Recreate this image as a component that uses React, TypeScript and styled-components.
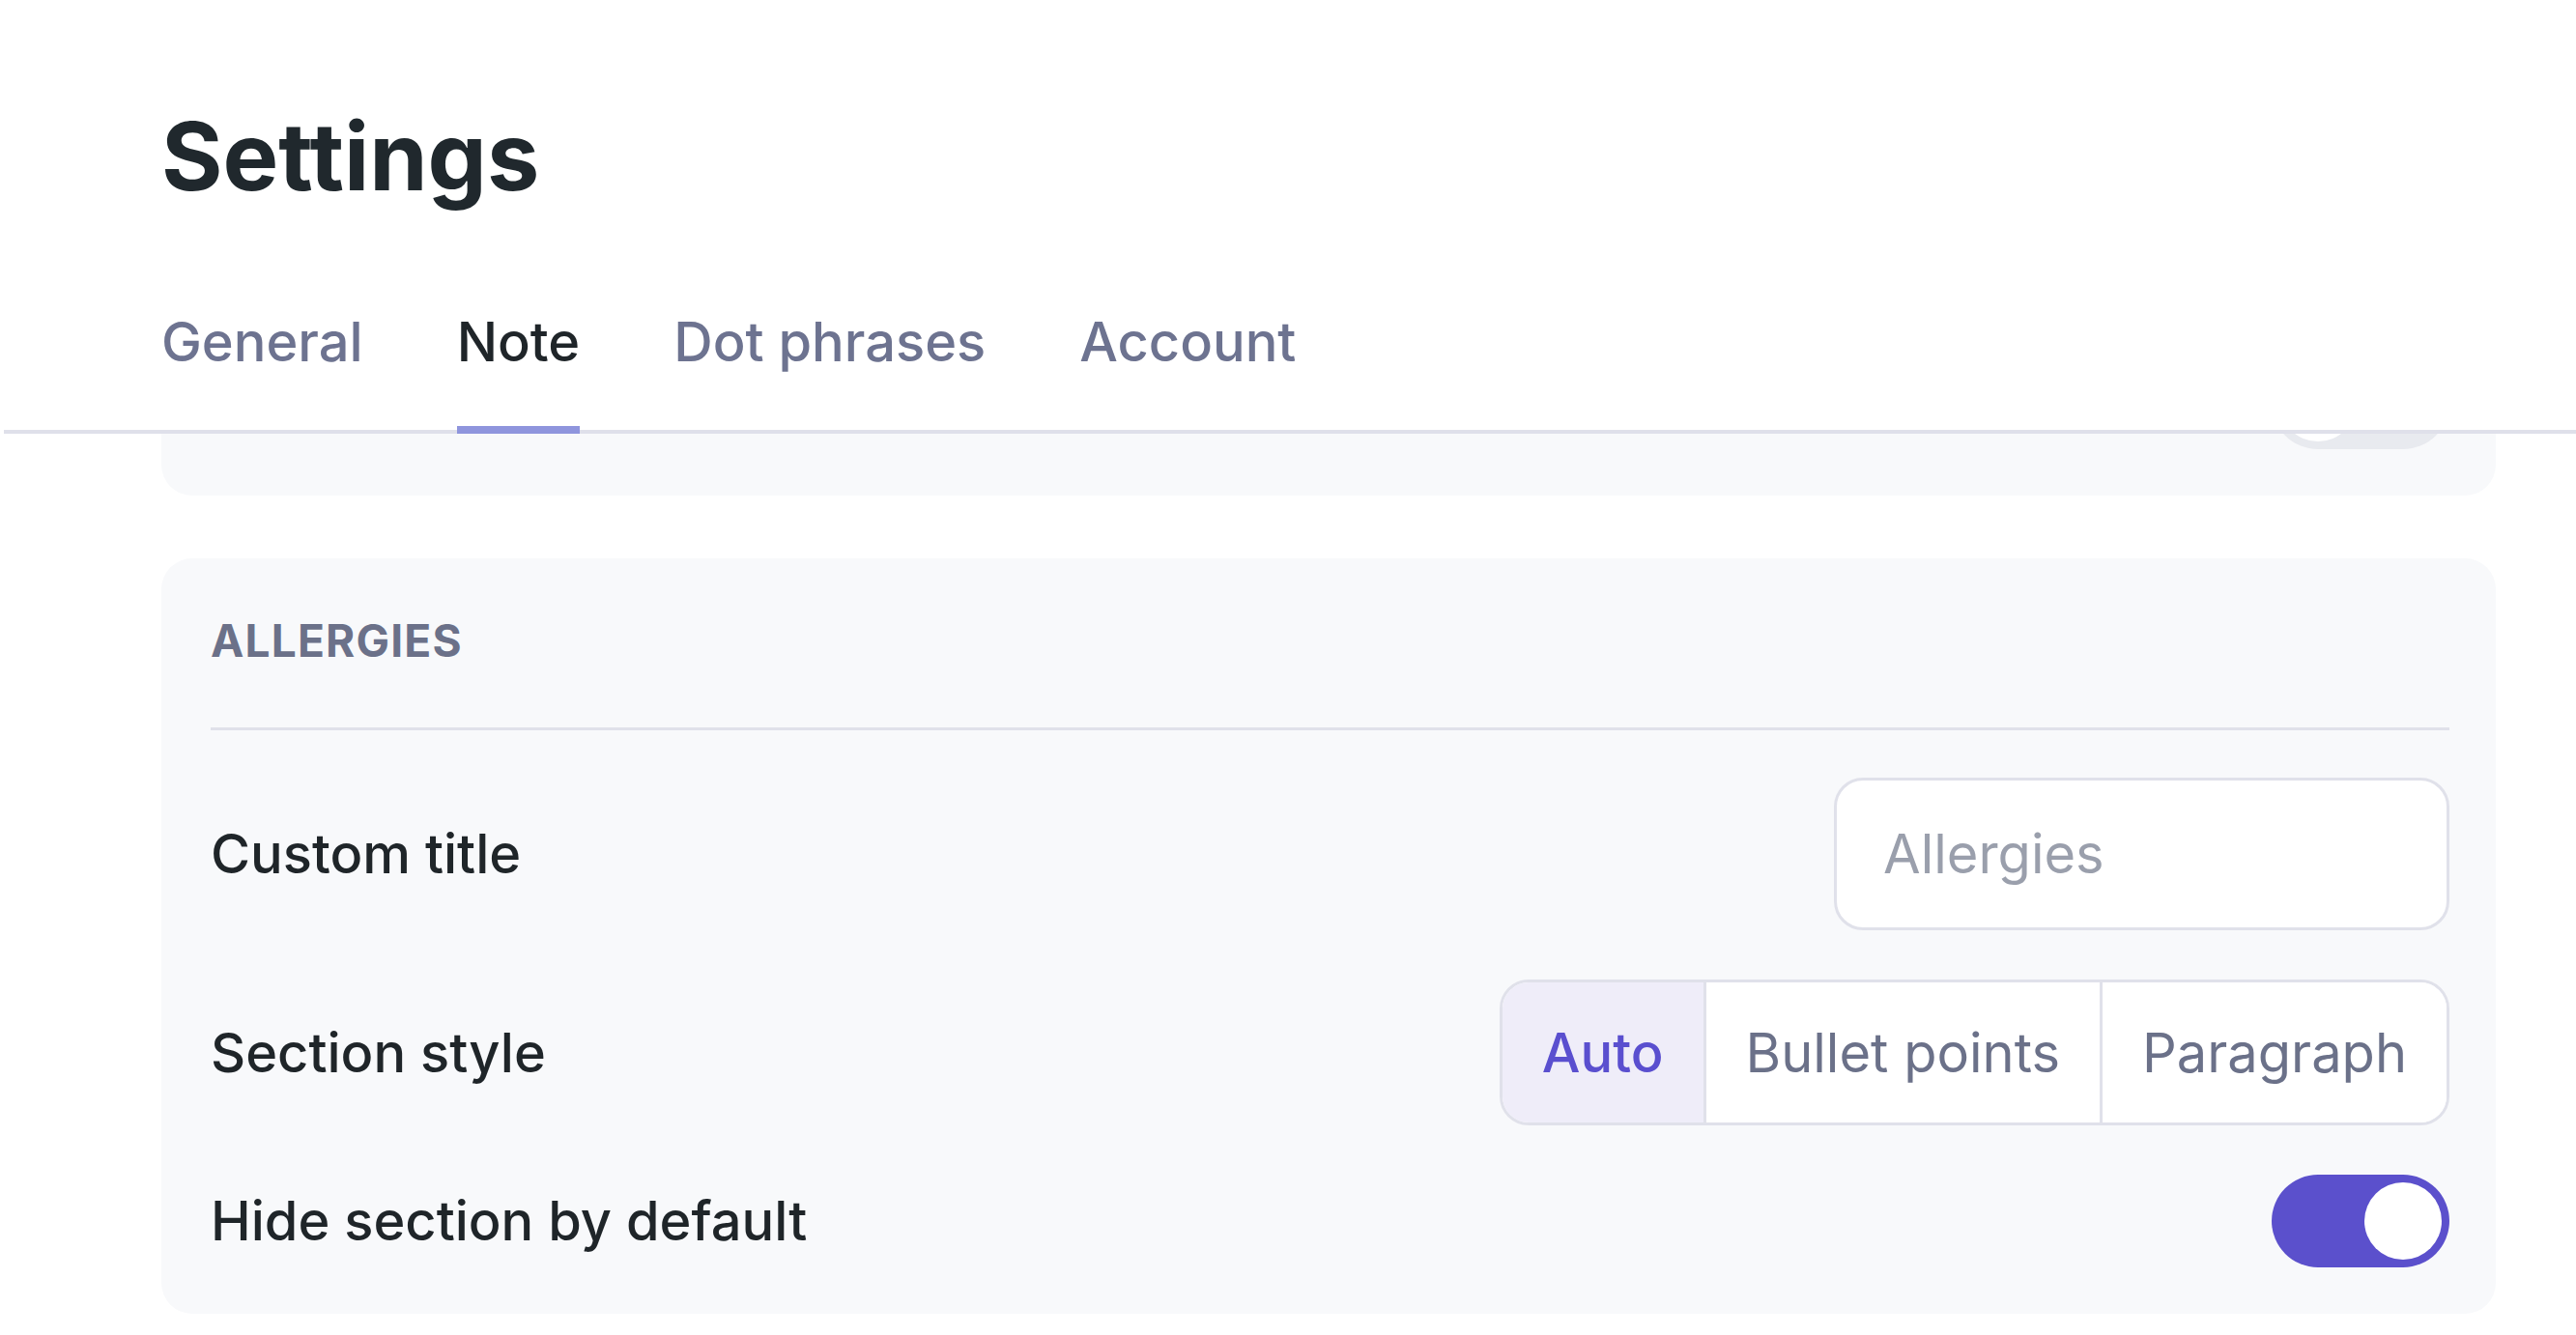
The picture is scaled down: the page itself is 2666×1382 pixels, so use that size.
import { useLayoutEffect, useRef } from "react";
import styled, { createGlobalStyle } from "styled-components";

const GlobalStyle = createGlobalStyle`
    html, body {
        margin: 0;
        padding: 0;
        background: #ffffff;
        font-family: Inter, "Noto Sans", sans-serif;
        color: #1f2529;
    }
    * {
        box-sizing: border-box;
    }
`;

type StyleOption = "Auto" | "Bullet points" | "Paragraph";

type Section = {
    key: string;
    heading: string;
    placeholder: string;
    style: StyleOption;
    hidden: boolean;
};

const sections: Section[] = [
    { key: "hpi", heading: "History of present illness", placeholder: "History of present illness", style: "Paragraph", hidden: false },
    { key: "medications", heading: "Medications", placeholder: "Medications", style: "Bullet points", hidden: false },
    { key: "allergies", heading: "Allergies", placeholder: "Allergies", style: "Auto", hidden: true },
];

const tabs = ["General", "Note", "Dot phrases", "Account"];
const styleOptions: StyleOption[] = ["Auto", "Bullet points", "Paragraph"];

const Page = styled.div`
    height: 100vh;
    display: flex;
    flex-direction: column;
`;

const Header = styled.header`
    flex: none;
    margin-left: 4px;
    padding: 104px 0 0 163px;
    border-bottom: 4px solid #dfe0ea;
    background: #ffffff;
`;

const Title = styled.h1`
    margin: 0 0 92px;
    font-size: 97px;
    line-height: 1.2;
    font-weight: 700;
    color: #20282d;
`;

const TabList = styled.nav`
    display: flex;
    gap: 97px;
    margin-bottom: -4px;
`;

const Tab = styled.span<{ $active?: boolean }>`
    display: block;
    padding-bottom: 53px;
    font-size: 56px;
    line-height: 84px;
    font-weight: 500;
    color: ${(p) => (p.$active ? "#1f2529" : "#6d7390")};
    box-shadow: ${(p) => (p.$active ? "inset 0 -8px 0 #8f95dd" : "none")};
    cursor: pointer;
`;

const ScrollArea = styled.main`
    flex: 1;
    overflow-y: auto;
    scrollbar-width: none;
    padding: 0 83px 22px 167px;
    display: flex;
    flex-direction: column;
    gap: 65px;

    &::-webkit-scrollbar {
        display: none;
    }
`;

const Card = styled.section`
    flex: none;
    background: #f8f9fb;
    border-radius: 32px;
    padding: 51px 48px 48px 51px;
`;

const CardHeading = styled.h2`
    margin: 0;
    padding-bottom: 55px;
    border-bottom: 3px solid #e0e1ea;
    font-size: 46px;
    line-height: 69px;
    font-weight: 700;
    letter-spacing: 1.2px;
    text-transform: uppercase;
    color: #6b7189;
`;

const Rows = styled.div`
    margin-top: 49px;
    display: flex;
    flex-direction: column;
    gap: 51px;
`;

const Row = styled.div`
    display: flex;
    align-items: center;
    justify-content: space-between;
`;

const Label = styled.span`
    font-size: 56px;
    font-weight: 500;
    color: #1f2529;
`;

const TextInput = styled.input`
    width: 637px;
    height: 158px;
    padding: 0 48px;
    border: 3px solid #e0e1ea;
    border-radius: 30px;
    background: #ffffff;
    font-family: inherit;
    font-size: 56px;
    color: #1f2529;
    outline: none;

    &::placeholder {
        color: #9a9fac;
    }
`;

const Segmented = styled.div`
    display: flex;
    height: 151px;
    border: 3px solid #e0e1ea;
    border-radius: 30px;
    overflow: hidden;
    background: #ffffff;
`;

const Segment = styled.button<{ $active?: boolean }>`
    appearance: none;
    border: none;
    margin: 0;
    padding: 0 41px;
    font-family: inherit;
    font-size: 56px;
    font-weight: ${(p) => (p.$active ? 500 : 400)};
    color: ${(p) => (p.$active ? "#5a4fcf" : "#6b7189")};
    background: ${(p) => (p.$active ? "#efedf9" : "#ffffff")};
    cursor: pointer;

    & + & {
        border-left: 3px solid #e0e1ea;
    }
`;

const Switch = styled.button<{ $on?: boolean }>`
    appearance: none;
    border: none;
    margin: 0;
    width: 184px;
    height: 96px;
    padding: 8px;
    border-radius: 48px;
    display: flex;
    justify-content: ${(p) => (p.$on ? "flex-end" : "flex-start")};
    background: ${(p) => (p.$on ? "#5b50cc" : "#e8eaef")};
    cursor: pointer;
`;

const Knob = styled.span`
    width: 80px;
    height: 80px;
    border-radius: 50%;
    background: #ffffff;
`;

const SectionCard = ({ section }: { section: Section }) => (
    <Card>
        <CardHeading>{section.heading}</CardHeading>
        <Rows>
            <Row>
                <Label>Custom title</Label>
                <TextInput placeholder={section.placeholder} />
            </Row>
            <Row>
                <Label>Section style</Label>
                <Segmented>
                    {styleOptions.map((opt) => (
                        <Segment key={opt} $active={opt === section.style}>
                            {opt}
                        </Segment>
                    ))}
                </Segmented>
            </Row>
            <Row>
                <Label>Hide section by default</Label>
                <Switch $on={section.hidden}>
                    <Knob />
                </Switch>
            </Row>
        </Rows>
    </Card>
);

const App = () => {
    const scrollRef = useRef<HTMLElement>(null);

    // the page is shown scrolled to the last section
    useLayoutEffect(() => {
        const el = scrollRef.current;
        if (el) {
            el.scrollTop = el.scrollHeight;
        }
    }, []);

    return (
        <Page>
            <GlobalStyle />
            <Header>
                <Title>Settings</Title>
                <TabList>
                    {tabs.map((tab) => (
                        <Tab key={tab} $active={tab === "Note"}>
                            {tab}
                        </Tab>
                    ))}
                </TabList>
            </Header>
            <ScrollArea ref={scrollRef}>
                {sections.map((section) => (
                    <SectionCard key={section.key} section={section} />
                ))}
            </ScrollArea>
        </Page>
    );
};

export default App;
